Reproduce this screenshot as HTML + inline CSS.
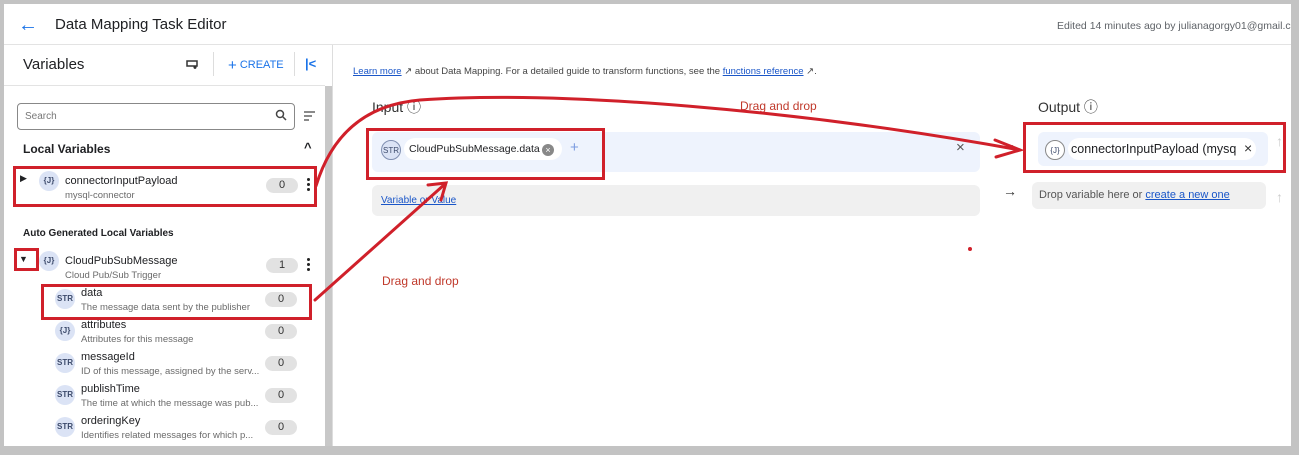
<!DOCTYPE html>
<html><head><style>
*{margin:0;padding:0;box-sizing:border-box}
body{width:1299px;height:455px;background:#c3c3c3;font-family:"Liberation Sans",sans-serif;position:relative;overflow:hidden;color:#202124}
.a{position:absolute}
.w{background:#fff}
.t{position:absolute;white-space:nowrap}
.chip{position:absolute;width:20px;height:20px;border-radius:50%;background:#dbe3f5;color:#3c4a6b;font-size:8px;font-weight:bold;text-align:center;line-height:20px}
.cnt{position:absolute;width:32px;height:15px;border-radius:8px;background:#e2e2e2;font-size:11px;text-align:center;line-height:15px;color:#333}
.nm{font-size:11px;color:#202124}
.ds{font-size:9.5px;color:#6b6b6b}
.dots{position:absolute;width:3px}
.dots i{display:block;width:3px;height:3px;border-radius:50%;background:#222;margin-bottom:2px}
.rb{position:absolute;border:3px solid #d0202a}
</style></head><body>
<div class="a w" style="left:4px;top:4px;width:1287px;height:442px"></div>
<!-- header -->
<div class="t" style="left:18px;top:14px;font-size:20px;color:#1a73e8">&#8592;</div>
<div class="t" style="left:55px;top:16px;font-size:15px">Data Mapping Task Editor</div>
<div class="t" style="left:1057px;top:20px;font-size:10.5px;color:#5f6368">Edited 14 minutes ago by julianagorgy01@gmail.com</div>
<div class="a" style="left:4px;top:44px;width:1287px;height:1px;background:#e3e3e3"></div>
<div class="a" style="left:1291px;top:0;width:8px;height:455px;background:#c3c3c3"></div>
<!-- left panel -->
<div class="a" style="left:332px;top:45px;width:1px;height:401px;background:#ddd"></div>
<div class="a" style="left:325px;top:86px;width:7px;height:360px;background:#c8c8c8"></div>
<div class="t" style="left:23px;top:56px;font-size:15px">Variables</div>
<svg class="a" style="left:186px;top:58px" width="14" height="12"><path d="M1 3h10v5H1z M9 8v3 M7.5 9.5h3" fill="none" stroke="#333" stroke-width="1.5"/></svg>
<div class="a" style="left:213px;top:52px;width:1px;height:24px;background:#ddd"></div>
<div class="t" style="left:228px;top:57px;font-size:11px;color:#1a73e8"><span style="font-size:15px;vertical-align:-2px">+</span> CREATE</div>
<div class="a" style="left:294px;top:52px;width:1px;height:24px;background:#ddd"></div>
<div class="t" style="left:305px;top:56px;font-size:13px;color:#1a73e8;font-weight:bold">|&lt;</div>
<div class="a" style="left:4px;top:85px;width:321px;height:1px;background:#e3e3e3"></div>
<div class="a" style="left:17px;top:103px;width:278px;height:27px;border:1px solid #888;border-radius:4px"></div>
<div class="t" style="left:25px;top:111px;font-size:10px;color:#777">Search</div>
<svg class="a" style="left:275px;top:109px" width="12" height="12"><circle cx="5" cy="5" r="3.5" fill="none" stroke="#444" stroke-width="1.5"/><path d="M7.5 7.5l3.5 3.5" stroke="#444" stroke-width="1.5"/></svg>
<svg class="a" style="left:304px;top:111px" width="12" height="10"><path d="M0 1h11M0 5h8M0 9h5" stroke="#444" stroke-width="1.3"/></svg>
<div class="t" style="left:23px;top:142px;font-size:12px;font-weight:bold">Local Variables</div>
<div class="t" style="left:304px;top:140px;font-size:13px;font-weight:bold">^</div>
<div class="t" style="left:20px;top:173px;font-size:9px">&#9654;</div>
<div class="chip" style="left:39px;top:171px">{J}</div>
<div class="t nm" style="left:65px;top:175px">connectorInputPayload</div>
<div class="t ds" style="left:65px;top:190px">mysql-connector</div>
<div class="cnt" style="left:266px;top:178px">0</div>
<div class="dots" style="left:307px;top:178px"><i></i><i></i><i></i></div>
<div class="t" style="left:23px;top:228px;font-size:10px;font-weight:bold">Auto Generated Local Variables</div>
<div class="t" style="left:19px;top:254px;font-size:9px">&#9660;</div>
<div class="chip" style="left:39px;top:251px">{J}</div>
<div class="t nm" style="left:65px;top:255px">CloudPubSubMessage</div>
<div class="t ds" style="left:65px;top:270px">Cloud Pub/Sub Trigger</div>
<div class="cnt" style="left:266px;top:258px">1</div>
<div class="dots" style="left:307px;top:258px"><i></i><i></i><i></i></div>
<div class="chip" style="left:55px;top:289px">STR</div>
<div class="t nm" style="left:81px;top:287px">data</div>
<div class="t ds" style="left:81px;top:302px">The message data sent by the publisher</div>
<div class="cnt" style="left:265px;top:292px">0</div>
<div class="chip" style="left:55px;top:321px">{J}</div>
<div class="t nm" style="left:81px;top:319px">attributes</div>
<div class="t ds" style="left:81px;top:334px">Attributes for this message</div>
<div class="cnt" style="left:265px;top:324px">0</div>
<div class="chip" style="left:55px;top:353px">STR</div>
<div class="t nm" style="left:81px;top:351px">messageId</div>
<div class="t ds" style="left:81px;top:366px">ID of this message, assigned by the serv...</div>
<div class="cnt" style="left:265px;top:356px">0</div>
<div class="chip" style="left:55px;top:385px">STR</div>
<div class="t nm" style="left:81px;top:383px">publishTime</div>
<div class="t ds" style="left:81px;top:398px">The time at which the message was pub...</div>
<div class="cnt" style="left:265px;top:388px">0</div>
<div class="chip" style="left:55px;top:417px">STR</div>
<div class="t nm" style="left:81px;top:415px">orderingKey</div>
<div class="t ds" style="left:81px;top:430px">Identifies related messages for which p...</div>
<div class="cnt" style="left:265px;top:420px">0</div>
<!-- right -->
<div class="t" style="left:353px;top:66px;font-size:9.5px;color:#444"><u style="color:#1a56c8">Learn more</u> &#8599; about Data Mapping. For a detailed guide to transform functions, see the <u style="color:#1a56c8">functions reference</u> &#8599;.</div>
<div class="t" style="left:372px;top:97px;font-size:14px;color:#333">Input &#9432;</div>
<div class="t" style="left:740px;top:99px;font-size:12px;color:#c0392b">Drag and drop</div>
<div class="t" style="left:382px;top:274px;font-size:12px;color:#c0392b">Drag and drop</div>
<div class="a" style="left:372px;top:132px;width:608px;height:40px;background:#eef3fd;border-radius:6px"></div>
<div class="chip" style="left:381px;top:140px;border:1px solid #7f8eb0;font-weight:normal">STR</div>
<div class="a" style="left:404px;top:138px;width:158px;height:22px;background:#fff;border-radius:11px"></div>
<div class="t" style="left:409px;top:143px;font-size:10.5px">CloudPubSubMessage.data</div>
<div class="a" style="left:542px;top:144px;width:12px;height:12px;border-radius:50%;background:#888;color:#fff;font-size:9px;text-align:center;line-height:12px">&#215;</div>
<div class="t" style="left:570px;top:139px;font-size:15px;color:#7b9be0">+</div>
<div class="t" style="left:956px;top:139px;font-size:15px;color:#555">&#215;</div>
<div class="a" style="left:372px;top:185px;width:608px;height:31px;background:#f0f0f0;border-radius:6px"></div>
<div class="t" style="left:381px;top:195px;font-size:10px;color:#1a56c8;text-decoration:underline">Variable or Value</div>
<div class="t" style="left:1038px;top:97px;font-size:14px;color:#333">Output &#9432;</div>
<div class="t" style="left:1003px;top:136px;font-size:14px;color:#333">&#8594;</div>
<div class="a" style="left:1038px;top:132px;width:230px;height:34px;background:#eef3fd;border-radius:6px"></div>
<div class="chip" style="left:1045px;top:140px;border:1px solid #888;background:#fff;font-weight:normal">{J}</div>
<div class="a" style="left:1068px;top:138px;width:188px;height:22px;background:#fff;border-radius:11px"></div>
<div class="t" style="left:1071px;top:142px;font-size:12.5px">connectorInputPayload (mysq</div>
<div class="t" style="left:1244px;top:140px;font-size:14px;color:#333">&#215;</div>
<div class="t" style="left:1276px;top:133px;font-size:14px;color:#ccc">&#8593;</div>
<div class="t" style="left:1003px;top:183px;font-size:14px;color:#333">&#8594;</div>
<div class="a" style="left:1032px;top:182px;width:234px;height:27px;background:#f0f0f0;border-radius:6px"></div>
<div class="t" style="left:1039px;top:189px;font-size:11px;color:#555">Drop variable here or <u style="color:#1a56c8">create a new one</u></div>
<div class="t" style="left:1276px;top:189px;font-size:14px;color:#ccc">&#8593;</div>
<div class="a" style="left:968px;top:247px;width:4px;height:4px;border-radius:50%;background:#d0202a"></div>
<!-- red boxes -->
<div class="rb" style="left:13px;top:166px;width:304px;height:41px"></div>
<div class="rb" style="left:14px;top:248px;width:25px;height:23px"></div>
<div class="rb" style="left:41px;top:284px;width:271px;height:36px"></div>
<div class="rb" style="left:366px;top:128px;width:239px;height:52px"></div>
<div class="rb" style="left:1023px;top:122px;width:263px;height:51px"></div>
<svg class="a" style="left:0;top:0" width="1299" height="455">
<g fill="none" stroke="#d0202a" stroke-width="3" stroke-linecap="round">
<path d="M316 186 C330 140 360 105 420 100 C560 90 800 110 1020 150"/>
<path d="M995 140 L1020 150 L996 157"/>
<path d="M315 300 L445 184"/>
<path d="M428 185 L446 183 L441 200"/>
</g></svg>
</body></html>
